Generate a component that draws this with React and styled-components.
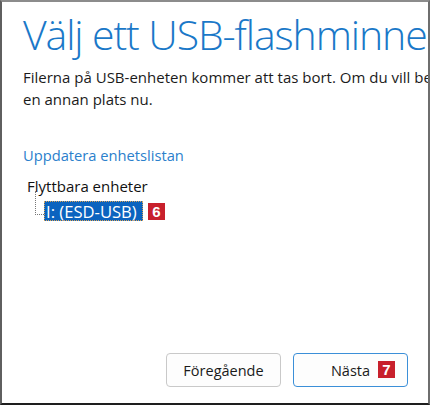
import React from "react";
import styled, { createGlobalStyle } from "styled-components";

const Global = createGlobalStyle`
  html, body {
    margin: 0;
    padding: 0;
    background: #ffffff;
  }
  body {
    font-family: "Open Sans", "Noto Sans", sans-serif;
  }
`;

const Frame = styled.div`
  box-sizing: border-box;
  width: 430px;
  height: 405px;
  overflow: hidden;
  display: flex;
  flex-direction: column;
  background: #ffffff;
  border-left: 2px solid #5f5f5f;
  border-top: 2px solid #8c8c8c;
  border-right: 2px solid #6e6e6e;
  border-bottom: 2px solid #1e1e1e;
  padding: 0 0 16px 21px;
`;

const Title = styled.h1`
  margin: 7px 0 0 0;
  font-family: "Open Sans", sans-serif;
  font-weight: 300;
  font-size: 41px;
  line-height: 50px;
  color: #1a78c8;
  white-space: nowrap;
  letter-spacing: -1.1px;
`;

const Intro = styled.p`
  margin: 7px 0 0 0;
  font-size: 15px;
  line-height: 22px;
  color: #1b1b1b;
  white-space: nowrap;
`;

const Line = styled.span`
  display: block;
`;

const RefreshLink = styled.a`
  display: block;
  margin-top: 34px;
  font-size: 14.7px;
  line-height: 22px;
  color: #2b80cc;
  text-decoration: none;
  cursor: pointer;
`;

const Tree = styled.div`
  margin-top: 9px;
  padding-left: 4px;
`;

const TreeRoot = styled.div`
  font-size: 15px;
  line-height: 22px;
  color: #111111;
`;

const TreeChild = styled.div`
  display: flex;
  align-items: center;
  height: 20px;
  margin: 4px 0 0 8px;
`;

const Connector = styled.span`
  box-sizing: border-box;
  width: 9px;
  height: 24px;
  margin-top: -16px;
  border-left: 1px dotted #777777;
  border-bottom: 1px dotted #777777;
`;

const Selected = styled.span`
  box-sizing: border-box;
  width: 99px;
  height: 20px;
  padding: 0 2px;
  display: flex;
  align-items: center;
  background: #0b63bf;
  outline: 1px dotted #d9a35a;
  outline-offset: -1px;
  color: #ffffff;
  font-family: "Open Sans", sans-serif;
  font-size: 16.6px;
  white-space: nowrap;
`;

const Badge = styled.span`
  display: inline-flex;
  align-items: center;
  justify-content: center;
  width: 17px;
  height: 17px;
  margin-left: 5px;
  background: #c8202c;
  color: #ffffff;
  font-family: "Liberation Sans", Arial, sans-serif;
  font-weight: 700;
  font-size: 15px;
  line-height: 1;
`;

const ButtonBadge = styled(Badge)`
  position: absolute;
  left: 84px;
  top: 7px;
  margin-left: 0;
`;

const Spacer = styled.div`
  flex: 1;
`;

const Actions = styled.div`
  display: flex;
  justify-content: flex-end;
  gap: 12px;
  padding-right: 20px;
`;

const Button = styled.button`
  position: relative;
  box-sizing: border-box;
  width: 115px;
  height: 34px;
  display: flex;
  align-items: center;
  justify-content: center;
  background: #fdfdfd;
  border: 1px solid ${(p) => (p.$primary ? "#3b8fd8" : "#c9c9c9")};
  border-radius: 4px;
  font-family: "Open Sans", sans-serif;
  font-size: 14.5px;
  color: #1a1a1a;
  padding: 0;
`;

export default function App() {
  return (
    <>
      <Global />
      <Frame>
        <Title>Välj ett USB-flashminne</Title>
        <Intro>
          <Line>
            Filerna på USB-enheten kommer att tas bort. Om du vill behålla dem
            ska du säkerhetskopiera dem till
          </Line>
          <Line>en annan plats nu.</Line>
        </Intro>
        <RefreshLink>Uppdatera enhetslistan</RefreshLink>
        <Tree>
          <TreeRoot>Flyttbara enheter</TreeRoot>
          <TreeChild>
            <Connector />
            <Selected>I: (ESD-USB)</Selected>
            <Badge>6</Badge>
          </TreeChild>
        </Tree>
        <Spacer />
        <Actions>
          <Button>Föregående</Button>
          <Button $primary>
            Nästa
            <ButtonBadge>7</ButtonBadge>
          </Button>
        </Actions>
      </Frame>
    </>
  );
}
